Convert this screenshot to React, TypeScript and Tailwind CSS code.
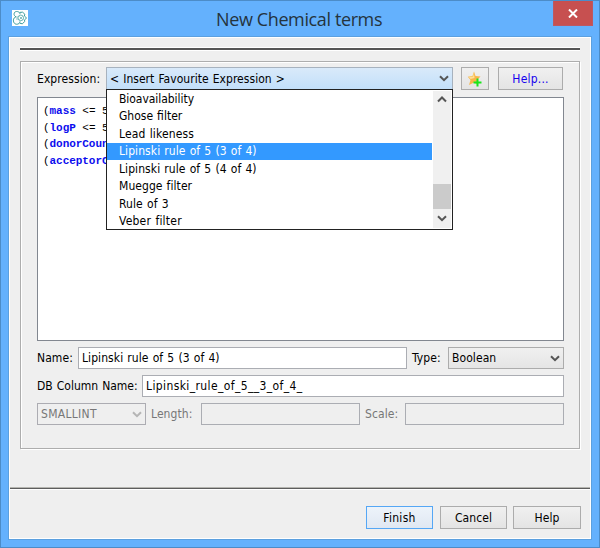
import type { ReactNode } from "react";

const options = [
  { label: "Bioavailability", spacing: "tracking-[-0.05px]" },
  { label: "Ghose filter", spacing: "tracking-[0px]" },
  { label: "Lead likeness", spacing: "tracking-[0.14px]" },
  { label: "Lipinski rule of 5 (3 of 4)", spacing: "tracking-[0.08px]" },
  { label: "Lipinski rule of 5 (4 of 4)", spacing: "tracking-[0.08px]" },
  { label: "Muegge filter", spacing: "tracking-[0.06px]" },
  { label: "Rule of 3", spacing: "tracking-[0.1px]" },
  { label: "Veber filter", spacing: "tracking-[0.22px]" },
];

const terms = [
  { name: "mass", rest: " <= 500) &&" },
  { name: "logP", rest: " <= 5) &&" },
  { name: "donorCount", rest: "() <= 5) &&" },
  { name: "acceptorCount", rest: "() <= 10)" },
];

function Chevron({ up = false, color = "#555555" }: { up?: boolean; color?: string }) {
  return (
    <svg width="10" height="7" viewBox="0 0 10 7" fill="none" className="shrink-0">
      <path d={up ? "M1 5.5 5 1.5 9 5.5" : "M1 1.2 5 5.2 9 1.2"} stroke={color} strokeWidth="2" />
    </svg>
  );
}

function Logo() {
  return (
    <svg width="16" height="16" viewBox="0 0 16 16" className="bg-white" fill="none" stroke="#3c9c9c" strokeWidth="1">
      <path d="M8 4.2C8.2 1.4 3 .3 2.2 3.2 1.6 5 2.8 6.2 4 6.8" />
      <path d="M4 6.8C1 7.6.6 11.8 2.8 13.6 5 15.2 8 13.6 8 11.4" />
      <path d="M7.6 2.4 10.6 2.2 12.8 4.2 12.4 6 14.6 8 12.6 9.8 12.6 11.6 10.4 13.8 7.6 13.2" />
      <circle cx="8.8" cy="7.9" r="2.8" stroke="#74b9b9" />
      <path d="M5 6v4M7.5 6.5l3 3M10.5 6.5l-3 3" stroke="#5ca9a9" strokeWidth=".7" />
    </svg>
  );
}

function FavouriteIcon() {
  return (
    <svg width="16" height="16" viewBox="0 0 16 16">
      <path d="M7 0.5 8.5 5 13.5 5.5 10 9 11 14 7 11.5 2 14 3.5 9 0.8 5.7 5.5 5Z" fill="#f7b64b" />
      <path d="M7 1.5 7.5 7 3.5 8 1.8 6 6 5.5Z" fill="#ffdf94" />
      <path d="M10.5 7.5v8M6.5 11.5h8" stroke="#19e51c" strokeWidth="2" />
    </svg>
  );
}

function Button({ children, primary = false, className }: { children: ReactNode; primary?: boolean; className: string }) {
  return (
    <button
      className={`flex h-[23px] items-center justify-center border bg-linear-to-b ${primary ? "border-[#55a7f5] from-[#edf3fa] to-[#e0e8f2]" : "border-[#acacac] from-[#f0f0f0] to-[#e4e4e4]"} ${className}`}
    >
      {children}
    </button>
  );
}

export default function App() {
  return (
    <div className="flex h-[548px] w-[600px] flex-col border border-[#4c8cc8] bg-[#64b1fd] px-[7px] pb-[7px] font-['DejaVu_Sans_Condensed','DejaVu_Sans',sans-serif] text-[12px] leading-none tracking-[0.08px] [word-spacing:0.6px] whitespace-pre text-black">
      <header className="flex h-[35px] shrink-0 items-start">
        <div className="ml-[4px] mt-[9px] w-[16px] shrink-0"><Logo /></div>
        <h1 className="ml-[188px] mt-[3px] w-[172px] font-['Open_Sans',sans-serif] text-[18px] leading-[30px] tracking-[-0.38px] [word-spacing:0px] text-[#24343d]">New Chemical terms</h1>
        <button className="ml-auto mr-[-1px] flex h-[25px] w-[40px] items-center justify-center border border-t-0 border-[#bc5862] bg-[#c75050]">
          <svg width="10" height="9" viewBox="0 0 10 9"><path d="M1 .5 9 8.5M9 .5 1 8.5" stroke="white" strokeWidth="2" /></svg>
        </button>
      </header>

      <main className="flex min-h-0 flex-1 flex-col border border-[#5ca0df] bg-[#efefef] shadow-[inset_0_0_0_1px_white]">
        <div className="mx-[11px] mt-[10px] h-[4px] shrink-0 border-y border-white bg-[#555555]" />
        <section className="mx-[11px] mt-[10px] h-[388px] shrink-0 border border-[#adadad] pl-[16px] pr-[15px] pt-[5px] shadow-[inset_1px_1px_white,1px_1px_white]">
          <div className="flex h-[23px] items-center">
            <label className="w-[69px] shrink-0">Expression:</label>
            <div className="relative w-[347px]">
              <div className="flex h-[23px] items-center justify-between border border-[#a7b2be] bg-linear-to-b from-[#d9eafa] to-[#c2dffa] pl-[3px] pr-[3px]">
                <span className="tracking-[0.04px]">{"< Insert Favourite Expression >"}</span>
                <Chevron />
              </div>
              <div className="absolute left-0 top-[22px] z-10 flex h-[141px] w-[347px] border border-[#222222] bg-white pr-px">
                <ul className="flex-1">
                  {options.map((option, i) => (
                    <li key={option.label} className={`flex h-[17.5px] items-center pl-[12px] ${option.spacing} ${i === 3 ? "bg-[#3399ff] text-white" : ""}`}>{option.label}</li>
                  ))}
                </ul>
                <div className="my-px ml-px flex w-[18px] flex-col items-center bg-[#f0f0f0] pt-[5px] pb-[6px]">
                  <Chevron up />
                  <div className="mt-[81px] h-[25px] w-full bg-[#cbcbcb]" />
                  <div className="mt-auto flex"><Chevron /></div>
                </div>
              </div>
            </div>
            <Button className="ml-[8px] w-[28px] shrink-0"><FavouriteIcon /></Button>
            <Button className="ml-[9px] w-[65px] shrink-0 tracking-[0.2px] text-[#1600ee]">Help...</Button>
          </div>

          <div className="mt-[7px] h-[244px] border border-[#828790] bg-white pl-[5px] pt-[5px] font-['Liberation_Mono',monospace] text-[11px] font-bold tracking-[-0.05px] [word-spacing:0px]">
            {terms.map((term) => (
              <div key={term.name} className="h-[16.5px] leading-[16.5px]">
                <span className="font-normal">(</span><span className="text-[#0c0cee]">{term.name}</span><span className="font-normal">{term.rest}</span>
              </div>
            ))}
          </div>

          <div className="mt-[6px] flex h-[22px] items-center">
            <label className="w-[41px] shrink-0">Name:</label>
            <div className="flex h-[22px] w-[329px] items-center border border-[#abadb3] bg-white pl-[3px]">Lipinski rule of 5 (3 of 4)</div>
            <label className="ml-[5px] w-[36px] shrink-0">Type:</label>
            <div className="flex h-[22px] flex-1 items-center justify-between border border-[#acacac] bg-linear-to-b from-[#f0f0f0] to-[#e5e5e5] pl-[3px] pr-[3px]">Boolean<Chevron /></div>
          </div>

          <div className="mt-[6px] flex h-[22px] items-center">
            <label className="w-[105px] shrink-0 tracking-[0px]">DB Column Name:</label>
            <div className="flex h-[22px] flex-1 items-center border border-[#abadb3] bg-white pl-[3px] tracking-[0.39px]">Lipinski_rule_of_5__3_of_4_</div>
          </div>

          <div className="mt-[6px] flex h-[22px] items-center text-[#777777]">
            <div className="flex h-[22px] w-[109px] shrink-0 items-center justify-between border border-[#acacb2] pl-[3px] pr-[3px] tracking-[0.3px]">SMALLINT<Chevron color="#b5b5b5" /></div>
            <label className="ml-[5px] w-[50px] shrink-0">Length:</label>
            <div className="h-[22px] w-[159px] shrink-0 border border-[#abadb3]" />
            <label className="ml-[5px] w-[40px] shrink-0">Scale:</label>
            <div className="h-[22px] flex-1 border border-[#abadb3]" />
          </div>
        </section>

        <div className="mx-px mt-auto h-[3px] shrink-0 border-y border-t-[#b5b5b0] border-b-white bg-[#5d5d5d]" />
        <footer className="flex h-[49px] shrink-0 items-start justify-end pr-[10px] pt-[16px]">
          <Button primary className="w-[67px] tracking-[0.3px]">Finish</Button>
          <Button className="ml-[7px] w-[67px]">Cancel</Button>
          <Button className="ml-[6px] w-[68px]">Help</Button>
        </footer>
      </main>
    </div>
  );
}
